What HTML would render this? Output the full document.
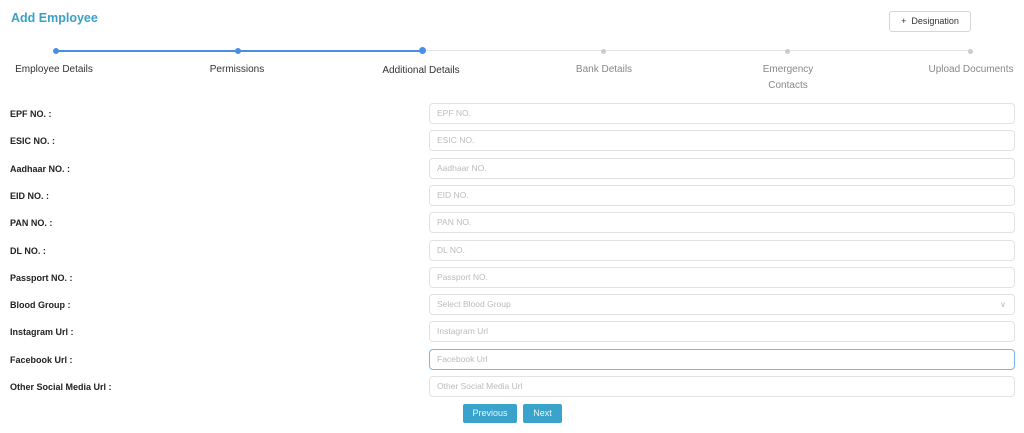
<!DOCTYPE html><html><head><style>
body{margin:0;width:1024px;height:433px;background:#fff;font-family:"Liberation Sans",sans-serif;position:relative;overflow:hidden}
.a{position:absolute}
.t{left:11px;top:11px;color:#3aa0c8;font-size:12.5px;font-weight:bold}
.des{left:889px;top:11px;width:80px;height:19px;border:1px solid #d6d6d6;border-radius:3px;font-size:9px;color:#333;line-height:19px;text-align:center}
.dot{width:6px;height:6px;border-radius:50%;top:48px}
.sl{font-size:10px;top:62px;text-align:center;width:120px;line-height:16px}
.lab{left:10px;font-size:9px;font-weight:bold;color:#222}
.in{left:429px;height:19px;border:1px solid #e2e2e2;border-radius:4px;font-size:8.5px;color:#bbb;line-height:19px;padding-left:7px;box-sizing:content-box;width:577px}
.btn{top:404px;height:19px;background:#3aa3cc;color:#eaf6fb;font-size:9px;line-height:19px;text-align:center;border-radius:2px}
</style></head><body>
<div class="a t">Add Employee</div>
<div class="a des">+&nbsp; Designation</div>
<div class="a" style="left:56px;top:50px;width:366px;height:2px;background:#4a90e2"></div>
<div class="a" style="left:422px;top:50px;width:549px;height:1px;background:#e4e4e4"></div>
<div class="a dot" style="left:53px;background:#4a90e2"></div>
<div class="a dot" style="left:235px;background:#4a90e2"></div>
<div class="a dot" style="left:419px;background:#4a90e2;width:7px;height:7px;top:47px"></div>
<div class="a dot" style="left:601px;background:#ccc;width:5px;height:5px;top:49px"></div>
<div class="a dot" style="left:785px;background:#ccc;width:5px;height:5px;top:49px"></div>
<div class="a dot" style="left:968px;background:#ccc;width:5px;height:5px;top:49px"></div>
<div class="a sl" style="left:-6px;color:#333">Employee Details</div>
<div class="a sl" style="left:177px;color:#333">Permissions</div>
<div class="a sl" style="left:361px;color:#333;top:63px">Additional Details</div>
<div class="a sl" style="left:544px;color:#888">Bank Details</div>
<div class="a sl" style="left:728px;color:#888">Emergency<br>Contacts</div>
<div class="a sl" style="left:911px;color:#888">Upload Documents</div>

<div class="a lab" style="top:109px">EPF NO. :</div><div class="a in" style="top:103px">EPF NO.</div>
<div class="a lab" style="top:136px">ESIC NO. :</div><div class="a in" style="top:130px">ESIC NO.</div>
<div class="a lab" style="top:164px">Aadhaar NO. :</div><div class="a in" style="top:158px">Aadhaar NO.</div>
<div class="a lab" style="top:191px">EID NO. :</div><div class="a in" style="top:185px">EID NO.</div>
<div class="a lab" style="top:218px">PAN NO. :</div><div class="a in" style="top:212px">PAN NO.</div>
<div class="a lab" style="top:246px">DL NO. :</div><div class="a in" style="top:240px">DL NO.</div>
<div class="a lab" style="top:273px">Passport NO. :</div><div class="a in" style="top:267px">Passport NO.</div>
<div class="a lab" style="top:300px">Blood Group :</div><div class="a in" style="top:294px">Select Blood Group<span style="position:absolute;right:8px;color:#bbb;font-size:8px">&#8744;</span></div>
<div class="a lab" style="top:327px">Instagram Url :</div><div class="a in" style="top:321px">Instagram Url</div>
<div class="a lab" style="top:355px">Facebook Url :</div><div class="a in" style="top:349px;border-color:#7ab8e0">Facebook Url</div>
<div class="a lab" style="top:382px">Other Social Media Url :</div><div class="a in" style="top:376px">Other Social Media Url</div>
<div class="a btn" style="left:463px;width:54px">Previous</div>
<div class="a btn" style="left:523px;width:39px">Next</div>
</body></html>
